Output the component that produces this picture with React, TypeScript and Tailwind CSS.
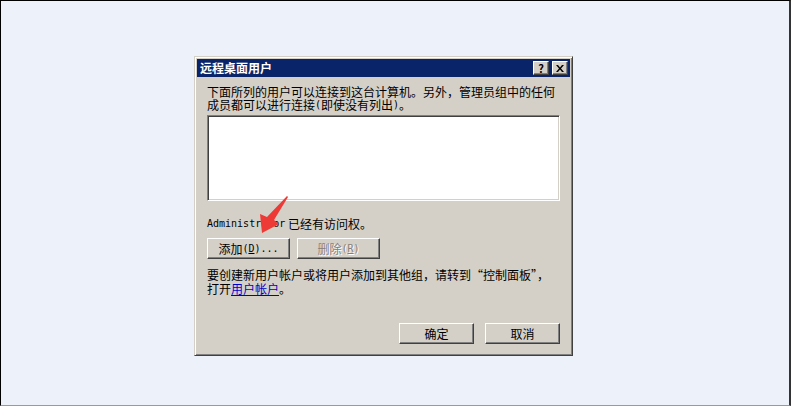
import React from "react";

const bevel =
  "border border-t-white border-l-white border-b-[#404040] border-r-[#404040] shadow-[inset_-1px_-1px_0_#808080] bg-[#d4d0c8]";

function Button({ children, disabled, w }: { children: React.ReactNode; disabled?: boolean; w: string }) {
  return (
    <div className={`${bevel} ${w} h-[21px] flex items-center justify-center text-[12px] leading-none ${disabled ? "text-[#808080] [text-shadow:1px_1px_0_#fff]" : "text-black"}`}>
      {children}
    </div>
  );
}

function Mono({ children }: { children: React.ReactNode }) {
  return <span className="font-['DejaVu_Sans_Mono',monospace] text-[10px] leading-none">{children}</span>;
}

function CaptionButton({ children }: { children: React.ReactNode }) {
  return (
    <div className={`${bevel} w-[16px] h-[14px] flex items-center justify-center text-[11px] font-bold leading-none text-black`}>
      {children}
    </div>
  );
}

function Line({ children, h }: { children: React.ReactNode; h: string }) {
  return <div className={`${h} flex items-center whitespace-nowrap`}>{children}</div>;
}

export default function App() {
  return (
    <div className="relative w-[791px] h-[406px] bg-[#edf2fa] border-t border-l border-black border-r-2 border-r-[#333] border-b border-b-[#9a9a9a] pl-[193px] pt-[55px] font-['Noto_Sans_CJK_SC',sans-serif]">
      {/* dialog */}
      <div className="w-[379px] h-[300px] bg-[#d4d0c8] border border-t-[#d4d0c8] border-l-[#d4d0c8] border-b-[#404040] border-r-[#404040] shadow-[inset_1px_1px_0_#fff,inset_-1px_-1px_0_#808080] p-[2px] flex flex-col">
        {/* title bar */}
        <div className="h-[18px] bg-[#0a246a] flex items-center justify-between pl-[3px] pr-[2px]">
          <span className="text-white font-bold text-[12px] leading-none">远程桌面用户</span>
          <div className="flex gap-[1px]">
            <CaptionButton>?</CaptionButton>
            <div className="w-[1px]" />
            <CaptionButton>
              <svg width="8" height="7" viewBox="0 0 8 7">
                <path d="M0 0h2l2 2.5L6 0h2L5 3.5 8 7H6L4 4.5 2 7H0l3-3.5z" fill="#000" />
              </svg>
            </CaptionButton>
          </div>
        </div>

        {/* body */}
        <div className="flex flex-col px-[10px] text-[12px] leading-none text-black">
          <div className="mt-[8px]">
            <Line h="h-[13px]">下面所列的用户可以连接到这台计算机。另外，管理员组中的任何</Line>
            <Line h="h-[13px]">
              成员都可以进行连接<Mono>(</Mono>即使没有列出<Mono>)</Mono>。
            </Line>
          </div>

          <div className="mt-[4px] w-[353px] h-[86px] bg-white border border-t-[#808080] border-l-[#808080] border-b-white border-r-white shadow-[inset_1px_1px_0_#404040,inset_-1px_-1px_0_#d4d0c8]" />

          <div className="mt-[16px]">
            <Line h="h-[13px]">
              <Mono>Administrator</Mono>&nbsp;已经有访问权。
            </Line>
          </div>

          <div className="mt-[8px] flex gap-[7px]">
            <Button w="w-[83px]">
              添加<Mono>
                (<span className="underline">D</span>)...
              </Mono>
            </Button>
            <Button w="w-[83px]" disabled>
              删除<Mono>
                (<span className="underline">R</span>)
              </Mono>
            </Button>
          </div>

          <div className="mt-[9px]">
            <Line h="h-[14px]">要创建新用户帐户或将用户添加到其他组，请转到“控制面板”，</Line>
            <Line h="h-[14px]">
              打开<span className="text-[#0000cc] underline">用户帐户</span>。
            </Line>
          </div>

          <div className="mt-[27px] flex justify-end gap-[11px] w-[353px]">
            <Button w="w-[75px]">确定</Button>
            <Button w="w-[75px]">取消</Button>
          </div>
        </div>
      </div>

      {/* red annotation arrow */}
      <svg className="absolute left-[250px] top-[190px]" width="44" height="46" viewBox="250 190 44 46">
        <path d="M287 196 L273 219 L278 223 L261 232 L259 213 L266 216 L286 195 Z" fill="#ee3a36" />
      </svg>
    </div>
  );
}
